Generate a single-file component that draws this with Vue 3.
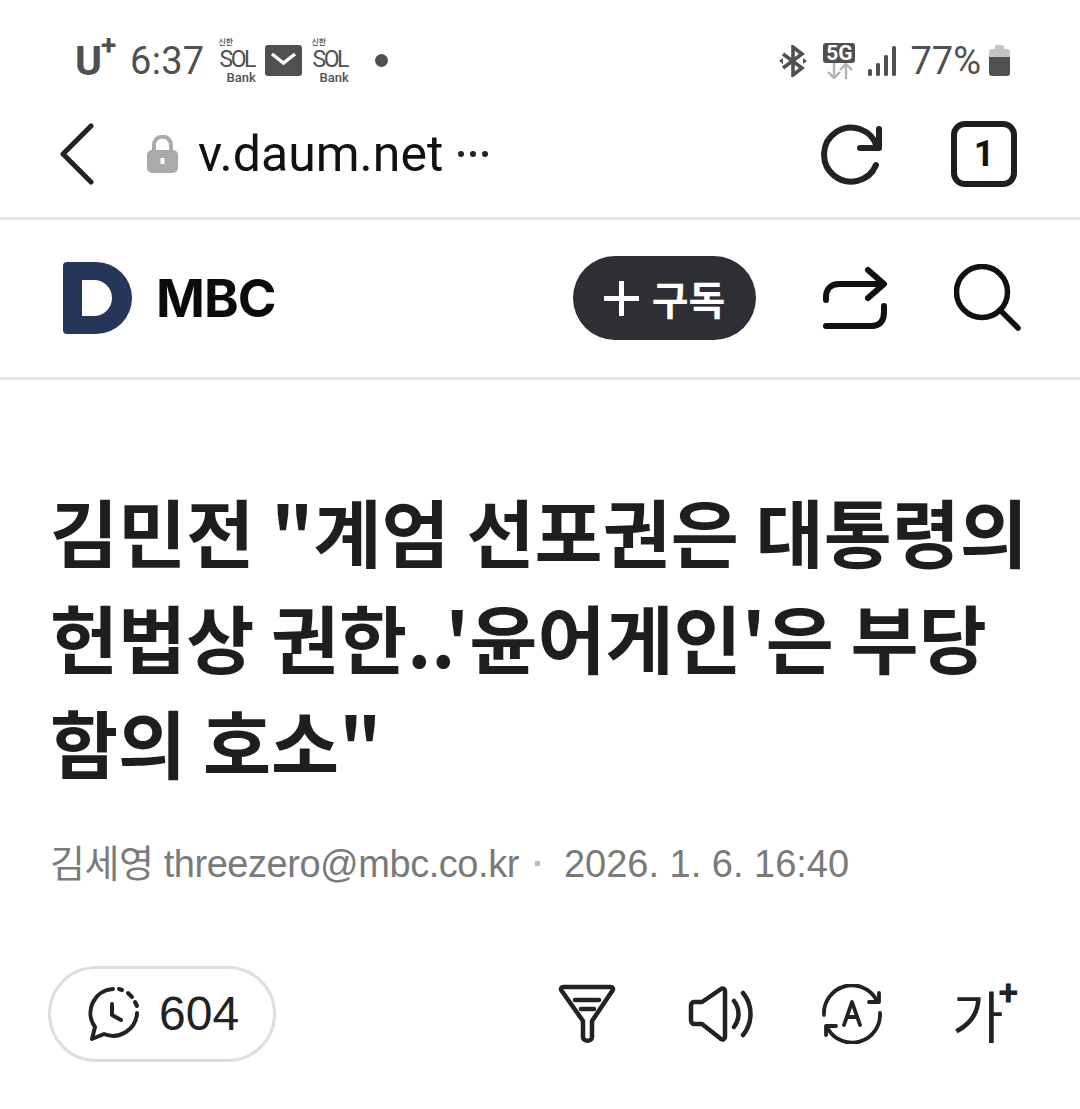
<template>
  <div class="page">
    <!-- 상태바 -->
    <div class="status-bar">
      <div class="status-left">
        <span class="carrier">U<sup>+</sup></span>
        <span class="clock">6:37</span>
        <span class="sol"><i>신한</i><b>SOL</b><em>Bank</em></span>
        <svg class="mail" width="37" height="31" viewBox="0 0 37 31">
          <rect width="37" height="31" rx="3" fill="#505050" />
          <path d="M7 9l11.500 9 11.500-9" fill="none" stroke="#fff" stroke-width="3.400" />
        </svg>
        <span class="sol"><i>신한</i><b>SOL</b><em>Bank</em></span>
        <span class="dot"></span>
      </div>
      <div class="status-right">
        <svg width="28" height="32" viewBox="0 0 28 32" fill="none" stroke="#505050" stroke-width="3.600">
          <path d="M4 9l19 14-9 7V2l9 7L4 23" />
          <path d="M0 16l4-3v6zM28 16l-4-3v6z" fill="#505050" stroke="none" />
        </svg>
        <div class="net">
          <span class="net-label">5G</span>
          <svg width="28" height="16" viewBox="0 0 28 16" fill="none" stroke="#b4b4b4" stroke-width="2.400">
            <path d="M9 0v14M3 9l6 6 6-6M21 16V2M15 7l6-6 6 6" />
          </svg>
        </div>
        <svg class="signal" width="28" height="30" viewBox="0 0 28 30" fill="#505050">
          <rect x="0" y="23" width="4" height="7" rx="1.500" />
          <rect x="8" y="17" width="4" height="13" rx="1.500" />
          <rect x="16" y="9" width="4" height="21" rx="1.500" />
          <rect x="24" y="0" width="4" height="30" rx="1.500" />
        </svg>
        <span class="battery-text">77%</span>
        <svg class="battery" width="21" height="31" viewBox="0 0 21 31">
          <path d="M6 2a2 2 0 0 1 2-2h5a2 2 0 0 1 2 2v2h3a3 3 0 0 1 3 3v5H0V7a3 3 0 0 1 3-3h3z" fill="#c4c4c4" />
          <path d="M0 12h21v16a3 3 0 0 1-3 3H3a3 3 0 0 1-3-3z" fill="#505050" />
        </svg>
      </div>
    </div>

    <!-- 브라우저 주소창 -->
    <div class="browser-bar">
      <svg class="back" width="36" height="62" viewBox="0 0 36 62" fill="none" stroke="#222" stroke-width="5" stroke-linecap="round" stroke-linejoin="round">
        <path d="M32 3L4 31l28 28" />
      </svg>
      <svg class="lock" width="31" height="38" viewBox="0 0 31 38">
        <path d="M7 17v-7a8.500 8.500 0 0 1 17 0v7" fill="none" stroke="#aaa" stroke-width="4" />
        <rect y="15" width="31" height="23" rx="5" fill="#aaa" />
        <rect x="13.500" y="23" width="4" height="6" fill="#fff" />
      </svg>
      <span class="url">v.daum.net</span>
      <span class="more"><i></i><i></i><i></i></span>
      <svg class="reload" width="62" height="62" viewBox="0 0 62 62" fill="none" stroke="#222" stroke-width="6" stroke-linecap="round" stroke-linejoin="round">
        <path d="M56 42A27 27 0 1 1 57 24" />
        <path d="M59 6v19H40" />
      </svg>
      <span class="tabs">1</span>
    </div>

    <!-- 미디어 헤더 -->
    <div class="media-bar">
      <svg class="logo" width="69" height="72" viewBox="0 0 69 72">
        <path d="M4 0h29a36 36 0 0 1 0 72H4a4 4 0 0 1-4-4V4a4 4 0 0 1 4-4z" fill="#25365a" />
        <path d="M19 18h12a18 18 0 0 1 0 36H19z" fill="#fff" />
      </svg>
      <span class="media-name">MBC</span>
      <button class="subscribe"><span class="plus"></span>구독</button>
      <svg class="share" width="66" height="64" viewBox="0 0 66 64" fill="none" stroke="#111" stroke-width="6" stroke-linecap="round" stroke-linejoin="round">
        <path d="M4 34v-3c0-8 5-13 13-13h44M46 4l16 14-16 14" />
        <path d="M62 40v6c0 9-4 14-12 14H4" />
      </svg>
      <svg class="search" width="68" height="68" viewBox="0 0 68 68" fill="none" stroke="#111" stroke-width="5.500" stroke-linecap="round">
        <circle cx="28" cy="28" r="25.500" />
        <path d="M46 46l18 18" />
      </svg>
    </div>

    <!-- 기사 제목 -->
    <div class="article-head">
      <h1 class="title">김민전 "계엄 선포권은 대통령의 헌법상 권한..'윤어게인'은 부당함의 호소"</h1>
      <div class="meta">
        <span class="byline">김세영 threezero@mbc.co.kr</span>
        <span class="sep"></span>
        <span>2026. 1. 6. 16:40</span>
      </div>
      <div class="tools">
        <div class="count-chip">
          <svg width="54" height="56" viewBox="0 0 54 56" fill="none" stroke="#222" stroke-width="4" stroke-linecap="round" stroke-linejoin="round">
            <path d="M26 3A24 24 0 0 0 8 41L5 53l12-5A24 24 0 0 0 50 27" />
            <path d="M32 3l3 1M41 7l4 4M48 16l2 4" />
            <path d="M25 18v11l9 5" />
          </svg>
          <span>604</span>
        </div>
        <div class="tool-icons">
          <svg width="58" height="60" viewBox="0 0 58 60" fill="none" stroke="#222" stroke-width="4.500" stroke-linecap="round" stroke-linejoin="round">
            <path d="M5 3h48c2 0 2.500 2 1.500 3.500L34 37v16c0 5-9 5-9 0V37L3.500 6.500C2.500 5 3 3 5 3z" />
            <path d="M17 16h24M23 25h13" />
          </svg>
          <svg class="tool-sound" width="66" height="56" viewBox="0 0 66 56" fill="none" stroke="#222" stroke-width="4.500" stroke-linecap="round" stroke-linejoin="round">
            <path d="M3 20v14c0 2 1 4 3 4h8l19 15c2 1 4 0 4-2V5c0-2-2-3-4-2L14 16H6c-2 0-3 2-3 4z" />
            <path d="M46 15c6 8 6 18 0 26M55 7c10 12 10 30 0 42" />
          </svg>
          <svg class="tool-trans" width="60" height="60" viewBox="0 0 60 60" fill="none" stroke="#222" stroke-width="3.800" stroke-linecap="round" stroke-linejoin="round">
            <path d="M2 31A28 28 0 0 1 54 15M58 29A28 28 0 0 1 6 45" />
            <path d="M57 9v9H47M4 51v-9h10" />
            <path d="M22 41l8-23 8 23M25 33h10" />
          </svg>
          <span class="font-size"><b>가</b><i>+</i></span>
        </div>
      </div>
    </div>
  </div>
</template>

<script setup>
</script>

<style>
html, body { background: #fff; }
</style>

<style scoped>
.page { width: 1080px; height: 1109px; overflow: hidden; background: #fff; font-family: "Roboto", "Noto Sans CJK KR", sans-serif; }
.status-bar { height: 108px; box-sizing: border-box; padding: 13px 70px 0 75px; display: flex; justify-content: space-between; align-items: center; color: #505050; }
.status-left, .status-right { display: flex; align-items: center; }
.carrier { font: 700 41px "Roboto", sans-serif; position: relative; width: 42px; height: 44px; line-height: 44px; }
.carrier sup { position: absolute; left: 26px; top: -8px; font-size: 28px; line-height: 30px; }
.clock { font-size: 38px; margin-left: 13px; letter-spacing: 0.3px; }
.sol { width: 46px; height: 46px; margin-left: 15px; display: flex; flex-direction: column; align-items: flex-start; font-style: normal; }
.sol i { font: 500 8px/8px "Noto Sans CJK KR", sans-serif; margin-left: -1px; }
.sol b { font: 400 23px/22px "Roboto", sans-serif; letter-spacing: -2.500px; margin-top: 3px; }
.sol em { font: 500 13px/14px "Roboto", sans-serif; margin-left: 7px; }
.mail + .sol { margin-left: 10px; }
.dot { width: 13px; height: 13px; border-radius: 50%; background: #505050; margin-left: 17px; }
.status-right svg { flex-shrink: 0; }
.net { display: flex; flex-direction: column; align-items: center; margin-left: 16px; width: 32px; }
.net-label { width: 32px; height: 20px; border-radius: 3px; background: #505050; color: #fff; font: 700 21px/20px "Roboto", sans-serif; text-align: center; }
.signal { margin-left: 13px; }
.battery-text { font-size: 38px; margin-left: 14px; }
.battery { margin-left: 8px; }
.browser-bar { height: 112px; box-sizing: border-box; padding: 0 63px 17px 59px; border-bottom: 3px solid #e8e8e8; display: flex; align-items: center; }
.lock { margin-left: 52px; }
.url { font-size: 50px; color: #111; margin-left: 20px; line-height: 1; }
.more { display: flex; gap: 6px; margin-left: 15px; }
.more i { width: 6px; height: 6px; border-radius: 50%; background: #222; }
.reload { margin-left: auto; }
.tabs { width: 66px; height: 66px; box-sizing: border-box; border: 6px solid #1e1e1e; border-radius: 14px; margin-left: 69px; font: 700 36px/54px "Roboto", sans-serif; text-align: center; color: #111; }
.media-bar { height: 160px; box-sizing: border-box; padding: 0 58px 1px 63px; border-bottom: 3px solid #e8e8e8; display: flex; align-items: center; }
.media-name { font: 700 52.500px "Inter", "Liberation Sans", sans-serif; color: #0b0b0b; margin-left: 24px; letter-spacing: -1px; }
.subscribe { width: 183px; height: 84px; border: none; border-radius: 42px; background: #2e2f35; color: #fff; margin-left: auto; display: flex; align-items: center; justify-content: center; font: 700 40px "Noto Sans CJK KR", sans-serif; padding: 0; }
.plus { width: 35px; height: 35px; margin-right: 13px; background: linear-gradient(#fff, #fff) center / 100% 5px no-repeat, linear-gradient(#fff, #fff) center / 5px 100% no-repeat; }
.share { margin-left: 66px; }
.search { margin-left: 66px; }
.article-head { padding: 97px 50px 0; }
.title { margin: 0; font: 700 74px/105.500px "Noto Sans CJK KR", sans-serif; color: #1e1e1e; word-break: break-all; }
.meta { display: flex; align-items: center; margin-top: 48px; font: 400 38px/44px "Liberation Sans", "Noto Sans CJK KR", sans-serif; color: #7a7a7a; }
.byline { letter-spacing: -0.450px; }
.sep { width: 5px; height: 5px; background: #bbb; margin: 0 24px 0 16px; }
.tools { display: flex; justify-content: space-between; align-items: center; margin-top: 80px; }
.count-chip { width: 228px; height: 96px; box-sizing: border-box; margin-left: -2px; border: 3px solid #dedede; border-radius: 48px; display: flex; align-items: center; padding-left: 36px; gap: 18px; font: 400 48px "Liberation Sans", sans-serif; color: #222; }
.tool-icons { display: flex; align-items: center; margin-right: 12px; }
.tool-sound { margin-left: 72px; }
.tool-trans { margin-left: 68px; }
.font-size { display: flex; position: relative; width: 66px; height: 60px; margin-left: 70px; color: #222; font-style: normal; }
.font-size b { font: 400 56px/60px "Noto Sans CJK KR", sans-serif; }
.font-size i { position: absolute; right: 0; top: -8px; font: 700 36px/34px "Roboto", sans-serif; }
</style>
